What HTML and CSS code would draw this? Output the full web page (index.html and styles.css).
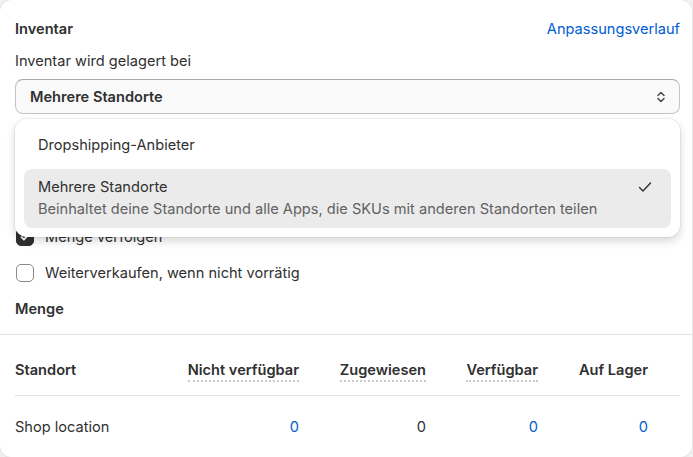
FILE: index.html
```html
<!DOCTYPE html>
<html lang="de">
<head>
    <meta charset="UTF-8">
    <meta name="viewport" content="width=device-width, initial-scale=1.0">
    <title>Inventar</title>
    <link rel="stylesheet" href="styles.css">
</head>
<body>
<div class="card">
    <div class="section">
        <div class="head">
            <h2>Inventar</h2>
            <a href="#" class="link">Anpassungsverlauf</a>
        </div>
        <p class="label">Inventar wird gelagert bei</p>
        <div class="select-wrap">
            <div class="select">
                <span>Mehrere Standorte</span>
                <svg width="20" height="20" viewBox="0 0 20 20"><path d="M7 8.5l3-3 3 3M7 11.5l3 3 3-3" fill="none" stroke="#4a4a4a" stroke-width="1.5" stroke-linecap="round" stroke-linejoin="round"/></svg>
            </div>
            <div class="popover">
                <div class="option">Dropshipping-Anbieter</div>
                <div class="option selected">
                    <div class="opt-text">
                        <div>Mehrere Standorte</div>
                        <div class="desc">Beinhaltet deine Standorte und alle Apps, die SKUs mit anderen Standorten teilen</div>
                    </div>
                    <svg width="20" height="20" viewBox="0 0 20 20"><path d="M4.5 10.5l3.5 3.5 7.5-8" fill="none" stroke="#303030" stroke-width="1.4" stroke-linecap="round" stroke-linejoin="round"/></svg>
                </div>
            </div>
        </div>
        <div class="checks">
            <label class="check"><span class="box on"><svg width="14" height="14" viewBox="0 0 14 14"><path d="M3.5 7.2l2.4 2.4 4.6-5" fill="none" stroke="#fff" stroke-width="1.8" stroke-linecap="round" stroke-linejoin="round"/></svg></span>Menge verfolgen</label>
            <label class="check"><span class="box"></span>Weiterverkaufen, wenn nicht vorrätig</label>
        </div>
        <h3>Menge</h3>
    </div>
    <div class="table">
        <div class="row header">
            <div class="cell left">Standort</div>
            <div class="cell"><span class="dotted">Nicht verfügbar</span></div>
            <div class="cell"><span class="dotted">Zugewiesen</span></div>
            <div class="cell"><span class="dotted">Verfügbar</span></div>
            <div class="cell">Auf Lager</div>
        </div>
        <div class="row body">
            <div class="cell left">Shop location</div>
            <div class="cell blue">0</div>
            <div class="cell">0</div>
            <div class="cell blue">0</div>
            <div class="cell blue">0</div>
        </div>
    </div>
</div>
</body>
</html>
```

FILE: styles.css
```css
*{
    margin: 0px;
    padding: 0px;
    box-sizing: border-box;
}
body{
    background: #f1f1f1;
    font-family: Inter, "Noto Sans", sans-serif;
    font-size: 14.6px;
    line-height: 20px;
    color: #303030;
}
.card{
    width: 692px;
    height: 457px;
    background: #fff;
    border-radius: 12px;
    box-shadow: 0 0 0 1px #e6e6e6, 0 1px 2px rgba(0,0,0,0.06);
}
.section{
    padding: 19px 12px 15px 15px;
    border-bottom: 1px solid #e3e3e3;
}
.head{
    display: flex;
    justify-content: space-between;
    align-items: center;
}
h2, h3{
    font-size: 14.6px;
    font-weight: 600;
    line-height: 20px;
}
.link{
    color: #005bd3;
    text-decoration: none;
}
.label{
    margin-top: 12px;
}
.select-wrap{
    position: relative;
    margin-top: 8px;
}
.select{
    display: flex;
    justify-content: space-between;
    align-items: center;
    height: 35px;
    padding: 0 8px 0 14px;
    background: #fafafa;
    border: 1px solid #c4c4c4;
    border-top-color: #a8a8a8;
    border-radius: 8px;
    font-weight: 600;
}
.popover{
    position: absolute;
    top: 40px;
    left: 0;
    right: 0;
    z-index: 2;
    background: #fff;
    border-radius: 12px;
    padding: 8px 9px 9px;
    display: flex;
    flex-direction: column;
    gap: 6px;
    box-shadow: 0 0 0 1px rgba(0,0,0,0.05), 0 4px 10px rgba(0,0,0,0.16);
}
.option{
    padding: 8px 14px;
    border-radius: 8px;
}
.option.selected{
    display: flex;
    justify-content: space-between;
    align-items: flex-start;
    background: #ebebeb;
    padding: 8px 16px 9px 14px;
}
.desc{
    color: #616161;
    margin-top: 2px;
}
.checks{
    margin-top: 113px;
    display: flex;
    flex-direction: column;
    gap: 16px;
}
.check{
    display: flex;
    align-items: center;
    gap: 11px;
}
.box{
    width: 18px;
    height: 18px;
    border: 1px solid #8a8a8a;
    border-radius: 5px;
    display: flex;
    align-items: center;
    justify-content: center;
    margin-left: 1px;
}
.box.on{
    background: #303030;
    border-color: #303030;
}
h3{
    margin-top: 16px;
}
.table{
    padding: 0 12px 0 15px;
}
.row{
    display: grid;
    grid-template-columns: 161px 123px 127px 112px 110px;
}
.header{
    padding: 25px 0 15px;
    border-bottom: 1px solid #e3e3e3;
    font-weight: 600;
}
.body{
    padding: 21px 0;
}
.cell{
    text-align: right;
}
.cell.left{
    text-align: left;
}
.dotted{
    border-bottom: 2px dotted #cccccc;
    padding-bottom: 1px;
}
.blue{
    color: #005bd3;
}
```
